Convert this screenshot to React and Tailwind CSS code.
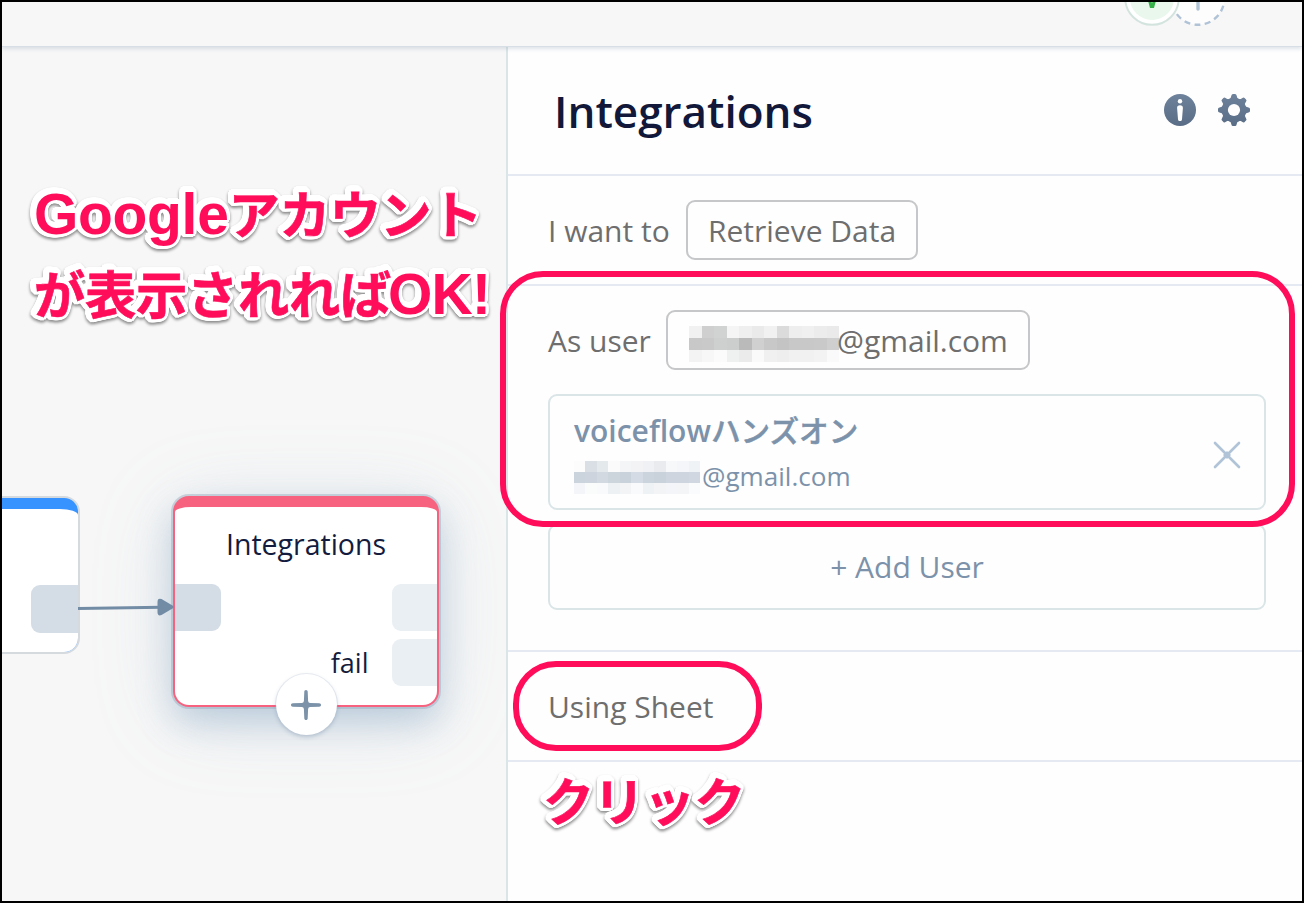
const USER_MASK = [
  ['#f1f1f1', '#cfcfcf', '#d1d2d2', '#f5f5f5', '#efefef', '#eaeaea', '#f1f1f1', '#dbdbdb', '#eeeeee', '#f0f0f0', '#ececec', '#eaeaea'],
  ['#c8c8c8', '#c9c9c9', '#cecfcf', '#cbcecd', '#bababa', '#d0d0d0', '#c8c8c8', '#c4c4c4', '#c8c8c8', '#c8c8c8', '#c9c9c9', '#cfcfcf'],
  ['#f3f3f3', '#f7f7f7', '#fbfbfb', '#eff0f0', '#ebebeb', '#fafafa', '#f0f0f0', '#eeeeee', '#f1f1f1', '#f1f1f1', '#f3f3f3', '#fafafa'],
];

const ACCOUNT_MASK = [
  ['#fcfcfc', '#dadfe6', '#e4e9ec', '#fbfbfb', '#f4f5f7', '#f3f3f5', '#eff1f4', '#e9ebef', '#f7f8fa', '#f5f6f9', '#f0f3f6'],
  ['#cbd3dd', '#ced4dd', '#d3d9e1', '#cdd5dc', '#c9d1da', '#d4dbe5', '#cbd4dc', '#c9d1db', '#ced5de', '#ced5df', '#d0d7e1'],
  ['#f3f5f8', '#fafbfb', '#f9fafb', '#eef1f4', '#f2f4f5', '#f9fafb', '#eff2f5', '#f2f4f6', '#f3f5f8', '#f3f5f7', '#f9fbfd'],
];

function Mosaic({ rows, className }) {
  return (
    <div className={`flex shrink-0 flex-col ${className}`}>
      {rows.map((row, i) => (
        <div key={i} className="flex flex-1">
          {row.map((c, j) => (
            <div key={j} className="flex-1" style={{ backgroundColor: c }} />
          ))}
        </div>
      ))}
    </div>
  );
}

function InfoIcon() {
  return (
    <svg width="32" height="32" viewBox="0 0 32 32">
      <defs>
        <linearGradient id="slate" x1="0" y1="0" x2="0" y2="1">
          <stop offset="0" stopColor="#6e829b" />
          <stop offset="1" stopColor="#5a6d86" />
        </linearGradient>
      </defs>
      <circle cx="16" cy="16" r="16" fill="url(#slate)" />
      <circle cx="16" cy="7.2" r="2.2" fill="#fff" />
      <path d="M16 11.3c1.9 0 3 .9 2.9 2.6l-.9 11.3c-.1 1.2-.8 1.9-2 1.9s-1.9-.7-2-1.9l-.9-11.3c-.1-1.7 1-2.6 2.9-2.6z" fill="#fff" />
    </svg>
  );
}

function GearIcon() {
  const angles = [0, 45, 90, 135, 180, 225, 270, 315];
  return (
    <svg width="32" height="32" viewBox="0 0 32 32">
      <defs>
        <linearGradient id="gear" gradientUnits="userSpaceOnUse" x1="0" y1="0" x2="0" y2="32">
          <stop offset="0" stopColor="#6e829b" />
          <stop offset="1" stopColor="#5a6d86" />
        </linearGradient>
        <mask id="gearMask">
          <circle cx="16" cy="16" r="12.3" fill="#fff" />
          {angles.map((a) => (
            <path key={a} transform={`rotate(${a} 16 16)`} fill="#fff" d="M11 5.5Q13.2 4 13.4 1.5Q13.6 0 15 0H17Q18.4 0 18.6 1.5Q18.8 4 21 5.5Z" />
          ))}
          <circle cx="16" cy="16" r="6.1" fill="#000" />
        </mask>
      </defs>
      <rect width="32" height="32" fill="url(#gear)" mask="url(#gearMask)" />
    </svg>
  );
}

function Avatars() {
  return (
    <svg className="ml-[1118px]" width="112" height="44" viewBox="1120 2 112 44">
      <circle cx="1198" cy="-1.5" r="26.3" fill="#fdfdfd" stroke="#afc2d6" strokeWidth="2.4" strokeDasharray="6 4.4" strokeDashoffset="3" />
      <path d="M1198 0V9" stroke="#afc2d6" strokeWidth="3.4" strokeLinecap="round" />
      <circle cx="1152" cy="-2" r="26.8" fill="#fff" stroke="#d3e4df" strokeWidth="2" />
      <circle cx="1152" cy="-2" r="22" fill="#e9f7ec" />
      <path d="M1146.5 -5L1150 8H1154L1157.5 -5H1154L1152 3.5L1150 -5Z" fill="#38b04a" />
    </svg>
  );
}

const label = 'text-[30px] leading-[40px] text-[#6e6e6e] whitespace-nowrap';
const callout =
  'absolute whitespace-nowrap font-bold text-[#ff0d5b] [filter:drop-shadow(1.7px_0_0_white)_drop-shadow(-1.7px_0_0_white)_drop-shadow(0_1.7px_0_white)_drop-shadow(0_-1.7px_0_white)_drop-shadow(1.2px_1.2px_0_white)_drop-shadow(-1.2px_-1.2px_0_white)_drop-shadow(1.2px_-1.2px_0_white)_drop-shadow(-1.2px_1.2px_0_white)_drop-shadow(0_2px_1.5px_rgba(0,0,0,0.45))]';
const jp = "font-['Noto_Sans_CJK_JP',sans-serif] text-[51.3px] font-bold [-webkit-text-stroke:0.6px_#ff0d5b]";
const latin = "font-['Liberation_Sans',sans-serif] text-[57px]";

export default function App() {
  return (
    <div className="relative flex h-[903px] w-[1304px] flex-col overflow-hidden border-2 border-black bg-[#f7f7f7] font-['Open_Sans',sans-serif]">
      <header className="z-10 h-[45px] shrink-0 border-b border-[#d8dee6] bg-[#f7f7f7] shadow-[0_2px_4px_rgba(110,132,160,0.22)]">
        <Avatars />
      </header>

      <div className="flex min-h-0 flex-1">
        <main className="relative w-[504px] shrink-0 overflow-hidden bg-[#f7f7f7]">
          {/* previous block */}
          <div className="absolute top-[449px] -left-[60px] h-[158px] w-[138px] overflow-hidden rounded-[16px] border-2 border-[#d5dadf] bg-[#3693ff]">
            <div className="mt-[11px] flex h-full justify-end rounded-[0_18px_0_0/0_6px_0_0] bg-white pt-[76px]">
              <div className="h-[47.5px] w-[47px] rounded-l-[9px] bg-[#d4dce5]" />
            </div>
          </div>

          {/* selected block */}
          <div className="absolute top-[449px] left-[171px] h-[211px] w-[266px] rounded-[16px] bg-[#f7627f] shadow-[0_0_0_2px_rgba(150,170,190,0.45),0_16px_34px_rgba(110,150,185,0.36),0_10px_84px_rgba(130,165,190,0.2)]">
            <div className="flex h-full flex-col px-[2px] pt-[11px] pb-[2px]">
              <div className="flex flex-1 flex-col rounded-[16px_16px_14px_14px/5px_5px_14px_14px] bg-white">
                <div className="mt-[17px] text-center text-[28.5px] leading-[40px] text-[#131c3e]">Integrations</div>
                <div className="mt-[19.5px] flex justify-between">
                  <div className="h-[47.5px] w-[45.5px] rounded-r-[9px] bg-[#d4dce5]" />
                  <div className="h-[47.5px] w-[45.5px] rounded-l-[9px] bg-[#e9eff3]" />
                </div>
                <div className="mt-[7.5px] flex items-center justify-end gap-[23px]">
                  <span className="pt-[2px] text-[27px] leading-[40px] text-[#131c3e]">fail</span>
                  <div className="h-[47.5px] w-[45.5px] rounded-l-[9px] bg-[#e9eff3]" />
                </div>
              </div>
            </div>
          </div>

          <div className="absolute top-[627px] left-[273.5px] flex h-[61px] w-[61px] items-center justify-center rounded-full bg-white shadow-[0_0_0_1px_rgba(190,200,215,0.3),0_2px_4px_rgba(60,90,130,0.28)]">
            <svg width="32" height="32" viewBox="0 0 32 32" fill="#7b92a8">
              <path d="M16 1c1 0 1.700.7 1.700 1.800l.4 9.200q.2 1.900 2 2l9.100.3c1.100 0 1.800.7 1.800 1.700s-.7 1.700-1.800 1.700l-9.100.3q-1.800.1-2 2l-.4 9.200c0 1.100-.7 1.800-1.700 1.800s-1.700-.7-1.700-1.800l-.4-9.200q-.2-1.900-2-2l-9.100-.3c-1.100 0-1.800-.7-1.800-1.700s.7-1.700 1.800-1.700l9.100-.3q1.800-.1 2-2l.4-9.200c0-1.100.7-1.800 1.700-1.800z" />
            </svg>
          </div>

          <svg className="absolute top-[550px] left-[76px]" width="98" height="24" viewBox="0 0 98 24">
            <path d="M0 11.5L84 10.3" stroke="#728ca5" strokeWidth="3" />
            <path d="M79.500 5q0-4.500 4-3l11 6.500q2.500 1.500 0 3l-11 6.500q-4 1.500-4-3z" fill="#728ca5" />
          </svg>
        </main>

        <aside className="flex flex-1 flex-col border-l-2 border-[#dae5e7] bg-[#fefefe]">
          <div className="flex h-[129px] shrink-0 items-center justify-between border-b-2 border-[#e4e9f2] pr-[52px] pl-[46px]">
            <h1 className="pt-[1px] text-[44px] leading-none font-semibold text-[#11183a]">Integrations</h1>
            <div className="flex gap-[22px] pb-[2px]">
              <InfoIcon />
              <GearIcon />
            </div>
          </div>

          <div className="flex h-[110px] shrink-0 items-center border-b-2 border-[#e4e9f2] pl-[40px]">
            <span className={`w-[138px] pt-[2px] ${label}`}>I want to</span>
            <button className={`flex h-[60px] w-[232px] items-center justify-center rounded-[9px] border-2 border-[#c6c7c9] pt-[2px] ${label}`}>Retrieve Data</button>
          </div>

          <div className="h-[366px] shrink-0 border-b-2 border-[#e4e9f2] pt-[24px] pl-[40px]">
            <div className="flex items-center">
              <span className={`w-[118px] pt-[2px] ${label}`}>As user</span>
              <button className="flex h-[60px] w-[364px] items-center rounded-[9px] border-2 border-[#c6c7c9] pt-[2px] pl-[21px]">
                <Mosaic rows={USER_MASK} className="mt-[6px] h-[36px] w-[150px]" />
                <span className={`-ml-[2px] ${label}`}>@gmail.com</span>
              </button>
            </div>
            <div className="mt-[24px] flex h-[116px] w-[718px] items-center justify-between rounded-[9px] border-2 border-[#dae5e7] pr-[22px] pl-[24px]">
              <div className="flex flex-col">
                <div className="text-[30px] leading-[44px] font-semibold whitespace-nowrap text-[#7c92aa]">
                  voiceflow<span className="font-['Noto_Sans_CJK_JP',sans-serif] text-[29.6px] font-medium [-webkit-text-stroke:0.5px_#7c92aa]">ハンズオン</span>
                </div>
                <div className="mt-[3px] flex items-center">
                  <Mosaic rows={ACCOUNT_MASK} className="mt-[3px] h-[33px] w-[126px]" />
                  <span className="ml-[2px] text-[26.1px] leading-[40px] text-[#7c92aa]">@gmail.com</span>
                </div>
              </div>
              <svg className="mt-[6px]" width="30" height="30" viewBox="0 0 30 30">
                <path d="M3 3L27 27M27 3L3 27" stroke="#b0c3d7" strokeWidth="2.6" strokeLinecap="round" />
                <path d="M15 11L19 15L15 19L11 15Z" fill="#b0c3d7" />
              </svg>
            </div>
            <div className="mt-[14px] flex h-[86px] w-[718px] items-center justify-center rounded-[9px] border-2 border-[#dae5e7] text-[30px] leading-[40px] text-[#7c92aa]">
              + Add User
            </div>
          </div>

          <div className="flex h-[110px] shrink-0 items-center border-b-2 border-[#e4e9f2] pl-[40px]">
            <span className={`pt-[2px] ${label}`}>Using Sheet</span>
          </div>
        </aside>
      </div>

      {/* highlight frames and callouts lie over the interface */}
      <div className="absolute top-[269px] left-[498px] z-20 h-[256px] w-[795px] rounded-[43px] border-[6px] border-[#ff0d5b]" />
      <div className="absolute top-[659px] left-[511px] z-20 h-[90px] w-[249px] rounded-[43px] border-[6px] border-[#ff0d5b]" />

      <div className={`${callout} top-[170px] left-[32px] z-20 leading-[80px]`}>
        <span className={`${latin} tracking-[-0.3px]`}>Google</span>
        <span className={`${jp} inline-block tracking-[-0.7px]`}>アカウント</span>
      </div>
      <div className={`${callout} top-[250px] left-[32px] z-20 leading-[80px]`}>
        <span className={`${jp} tracking-[-0.3px]`}>が表示されれば</span>
        <span className={`${latin} -ml-[3px] tracking-[-0.8px]`}>OK!</span>
      </div>
      <div className={`${callout} top-[757px] left-[541px] z-20 leading-[80px]`}>
        <span className={`${jp} tracking-[-0.9px]`}>クリック</span>
      </div>
    </div>
  );
}
